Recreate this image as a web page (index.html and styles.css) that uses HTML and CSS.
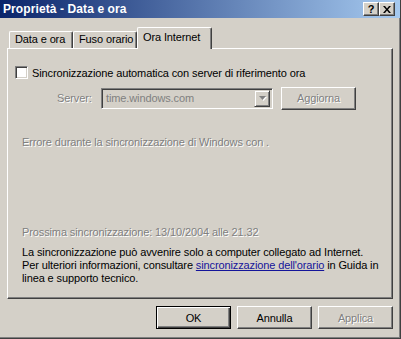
FILE: index.html
```html
<!DOCTYPE html>
<html>
<head>
    <title>Proprietà - Data e ora</title>
    <meta charset="utf-8">
    <link rel="stylesheet" href="styles.css">
</head>
<body>
    <div class="window">
        <div class="titlebar">
            <span class="title">Proprietà - Data e ora</span>
            <div class="title-btns">
                <span class="tbtn help">?</span>
                <span class="tbtn close">
                    <svg width="8" height="7" viewBox="0 0 8 7">
                        <path d="M0 0h2l2 2.5L6 0h2L5 3.5 8 7H6L4 4.5 2 7H0l3-3.5z" fill="#000"/>
                    </svg>
                </span>
            </div>
        </div>

        <div class="body">
            <!-- schede -->
            <div class="tabs">
                <div class="tab tab-date">Data e ora</div>
                <div class="tab tab-zone">Fuso orario</div>
                <div class="tab tab-net active">Ora Internet</div>
            </div>

            <div class="panel">
                <div class="check-row">
                    <span class="checkbox"></span>
                    <span>Sincronizzazione automatica con server di riferimento ora</span>
                </div>

                <div class="server-row">
                    <span class="server-label disabled">Server:</span>
                    <div class="combo">
                        <span class="combo-text">time.windows.com</span>
                        <span class="combo-btn">
                            <svg width="7" height="4" viewBox="0 0 7 4"><path d="M0 0h7L3.5 4z" fill="#808080"/></svg>
                        </span>
                    </div>
                    <div class="btn disabled btn-update">Aggiorna</div>
                </div>

                <p class="status disabled">Errore durante la sincronizzazione di Windows con .</p>

                <p class="next disabled">Prossima sincronizzazione: 13/10/2004 alle 21.32</p>
                <p class="info">La sincronizzazione può avvenire solo a computer collegato ad Internet.<br>Per ulteriori informazioni, consultare <a href="#">sincronizzazione dell'orario</a> in Guida in<br>linea e supporto tecnico.</p>
            </div>

            <div class="buttons">
                <div class="btn default">OK</div>
                <div class="btn">Annulla</div>
                <div class="btn disabled">Applica</div>
            </div>
        </div>
    </div>
</body>
</html>
```

FILE: styles.css
```css
/* base */
* {
    box-sizing: border-box;
}

body {
    margin: 0;
    font-family: 'Liberation Sans', Arial, sans-serif;
    font-size: 11px;
    letter-spacing: -0.12px;
    color: #000;
}

.window {
    width: 401px;
    height: 339px;
    background: #d4d0c8;
    border-right: 1px solid #404040;
    border-bottom: 1px solid #404040;
    box-shadow: inset -1px -1px #808080;
    overflow: hidden;
}

/* barra del titolo */
.titlebar {
    height: 18px;
    background: linear-gradient(to right, #0a246a, #a6caf0);
    color: #fff;
    display: flex;
    align-items: center;
    justify-content: space-between;
    padding: 0 5px 0 3px;
}

.title {
    font-weight: bold;
    font-size: 12px;
    letter-spacing: 0.1px;
}

.title-btns {
    display: flex;
}

.tbtn {
    width: 16px;
    height: 14px;
    background: #d4d0c8;
    color: #000;
    border: 1px solid;
    border-color: #fff #404040 #404040 #fff;
    box-shadow: inset -1px -1px #808080;
    display: flex;
    align-items: center;
    justify-content: center;
    font-weight: bold;
    font-size: 11px;
    line-height: 1;
}

/* schede */
.body {
    padding: 9px 0 0 7px;
}

.tabs {
    display: flex;
    align-items: flex-end;
    height: 21px;
    padding-left: 2px;
}

.tab {
    height: 17px;
    padding-left: 5px;
    line-height: 15px;
    background: #d4d0c8;
    border-top: 1px solid #fff;
    border-left: 1px solid #fff;
    border-right: 1px solid #404040;
    box-shadow: inset -1px 0 #808080;
    border-radius: 2px 2px 0 0;
    white-space: nowrap;
}

.tab-date {
    width: 64px;
}

.tab-zone {
    width: 64px;
}

.tab-net {
    width: 75px;
}

.tab.active {
    height: 22px;
    margin-bottom: -1px;
    position: relative;
    z-index: 1;
    line-height: 18px;
}

.panel {
    width: 386px;
    height: 251px;
    border: 1px solid;
    border-color: #fff #404040 #404040 #fff;
    box-shadow: inset -1px -1px #808080;
    padding: 17px 7px 0 7px;
}

.check-row {
    display: flex;
    align-items: center;
    gap: 4px;
    height: 13px;
}

.checkbox {
    width: 13px;
    height: 13px;
    background: #fff;
    border: 1px solid;
    border-color: #808080 #fff #fff #808080;
    box-shadow: inset 1px 1px #404040, inset -1px -1px #d4d0c8;
}

.server-row {
    display: flex;
    align-items: center;
    margin-top: 8px;
    height: 22px;
}

.server-label {
    margin-left: 42px;
    width: 44px;
}

.combo {
    width: 172px;
    height: 21px;
    border: 1px solid;
    border-color: #808080 #fff #fff #808080;
    box-shadow: inset 1px 1px #404040, inset -1px -1px #d4d0c8;
    display: flex;
    align-items: center;
    justify-content: space-between;
    padding: 2px;
}

.combo-text {
    color: #808080;
    padding-left: 2px;
}

.combo-btn {
    width: 16px;
    height: 17px;
    border: 1px solid;
    border-color: #d4d0c8 #404040 #404040 #d4d0c8;
    box-shadow: inset 1px 1px #fff, inset -1px -1px #808080;
    display: flex;
    align-items: center;
    justify-content: center;
}

.combo-btn svg {
    filter: drop-shadow(1px 1px 0 #fff);
}

.btn-update {
    margin-left: 8px;
    width: 82px;
}

/* testi */
.disabled {
    color: #808080;
    text-shadow: 1px 1px 0 #fff;
}

p {
    margin: 0;
    line-height: 13px;
    white-space: nowrap;
}

.status {
    margin: 27px 0 0 7px;
}

.next {
    margin: 77px 0 0 7px;
}

.info {
    margin: 7px 0 0 7px;
}

.info a {
    color: #14149a;
}

/* pulsanti */
.btn {
    height: 23px;
    width: 75px;
    background: #d4d0c8;
    border: 1px solid;
    border-color: #fff #404040 #404040 #fff;
    box-shadow: inset -1px -1px #808080;
    display: flex;
    align-items: center;
    justify-content: center;
}

.btn.default {
    border-color: #000;
    box-shadow: inset 1px 1px #fff, inset -1px -1px #404040, inset -2px -2px #808080;
}

.buttons {
    width: 386px;
    display: flex;
    justify-content: flex-end;
    gap: 6px;
    margin-top: 7px;
}
```
